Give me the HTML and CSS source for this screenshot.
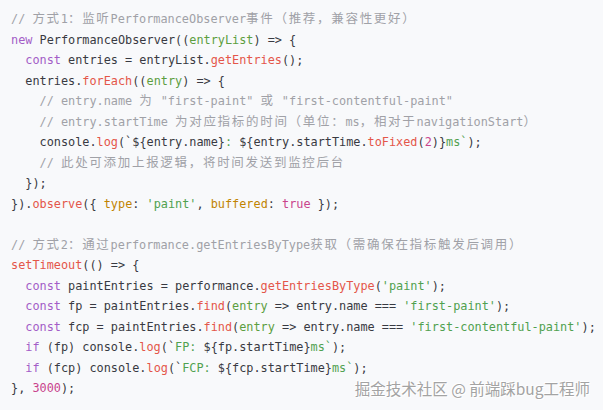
FILE: index.html
```html
<!DOCTYPE html>
<html lang="zh-CN">
<head>
<meta charset="utf-8">
<title>Paint timing code</title>
<link rel="stylesheet" href="styles.css">
</head>
<body>
<div class="block">
<pre class="code"><span class="c">// <span class="zh">方式</span>1<span class="zh">：监听</span>PerformanceObserver<span class="zh">事件（推荐，兼容性更好）</span></span>
<span class="k">new</span> PerformanceObserver((<span class="p">entryList</span>) =&gt; {
  <span class="k">const</span> entries = entryList.<span class="f">getEntries</span>();
  entries.<span class="f">forEach</span>((<span class="p">entry</span>) =&gt; {
    <span class="c">// entry.name <span class="zh">为</span> "first-paint" <span class="zh">或</span> "first-contentful-paint"</span>
    <span class="c">// entry.startTime <span class="zh">为对应指标的时间（单位：</span>ms<span class="zh">，相对于</span>navigationStart<span class="zh">）</span></span>
    console.<span class="f">log</span>(`${entry.name}<span class="s">: </span>${entry.startTime.<span class="f">toFixed</span>(<span class="n">2</span>)}<span class="s">ms`</span>);
    <span class="c">// <span class="zh">此处可添加上报逻辑，将时间发送到监控后台</span></span>
  });
}).<span class="f">observe</span>({ <span class="a">type</span>: <span class="s">'paint'</span>, <span class="a">buffered</span>: <span class="n">true</span> });

<span class="c">// <span class="zh">方式</span>2<span class="zh">：通过</span>performance.getEntriesByType<span class="zh">获取（需确保在指标触发后调用）</span></span>
<span class="f">setTimeout</span>(() =&gt; {
  <span class="k">const</span> paintEntries = performance.<span class="f">getEntriesByType</span>(<span class="s">'paint'</span>);
  <span class="k">const</span> fp = paintEntries.<span class="f">find</span>(<span class="p">entry</span> =&gt; entry.name === <span class="s">'first-paint'</span>);
  <span class="k">const</span> fcp = paintEntries.<span class="f">find</span>(<span class="p">entry</span> =&gt; entry.name === <span class="s">'first-contentful-paint'</span>);
  <span class="k">if</span> (fp) console.<span class="f">log</span>(`<span class="s">FP: </span>${fp.startTime}<span class="s">ms`</span>);
  <span class="k">if</span> (fcp) console.<span class="f">log</span>(`<span class="s">FCP: </span>${fcp.startTime}<span class="s">ms`</span>);
}, <span class="n">3000</span>);</pre>
<div class="watermark">掘金技术社区 @ 前端踩bug工程师</div>
</div>
</body>
</html>
```
FILE: styles.css
```css
html, body {
  margin: 0;
  padding: 0;
  background: #f8f9fb;
}
.block {
  position: relative;
  width: 603px;
  height: 410px;
  background: #f8f9fb;
  overflow: hidden;
}
.code {
  margin: 0;
  padding: 9px 0 0 11px;
  font-family: "DejaVu Sans Mono", "Noto Sans CJK SC", monospace;
  font-size: 11.85px;
  line-height: 20.5px;
  color: #383a42;
  white-space: pre;
}
.zh {
  font-family: "Noto Sans CJK SC", sans-serif;
  font-size: 12.5px;
  line-height: 1;
  letter-spacing: 1.7px;
}
.c { color: #a0a1a7; }
.k { color: #a35dc7; }
.f { color: #e45649; }
.p { color: #5c9e3f; }
.s { color: #50a14f; }
.a { color: #c18401; }
.n { color: #c9448c; }
.watermark {
  position: absolute;
  right: 13px;
  bottom: 11px;
  font-family: "Noto Sans CJK SC", sans-serif;
  font-size: 15.5px;
  line-height: 22px;
  color: #a3a3a3;
  text-shadow: 0 0 2px #fff, 0 0 1px #fff, 1px 1px 0 #fff, -1px -1px 0 #fff;
}
```
